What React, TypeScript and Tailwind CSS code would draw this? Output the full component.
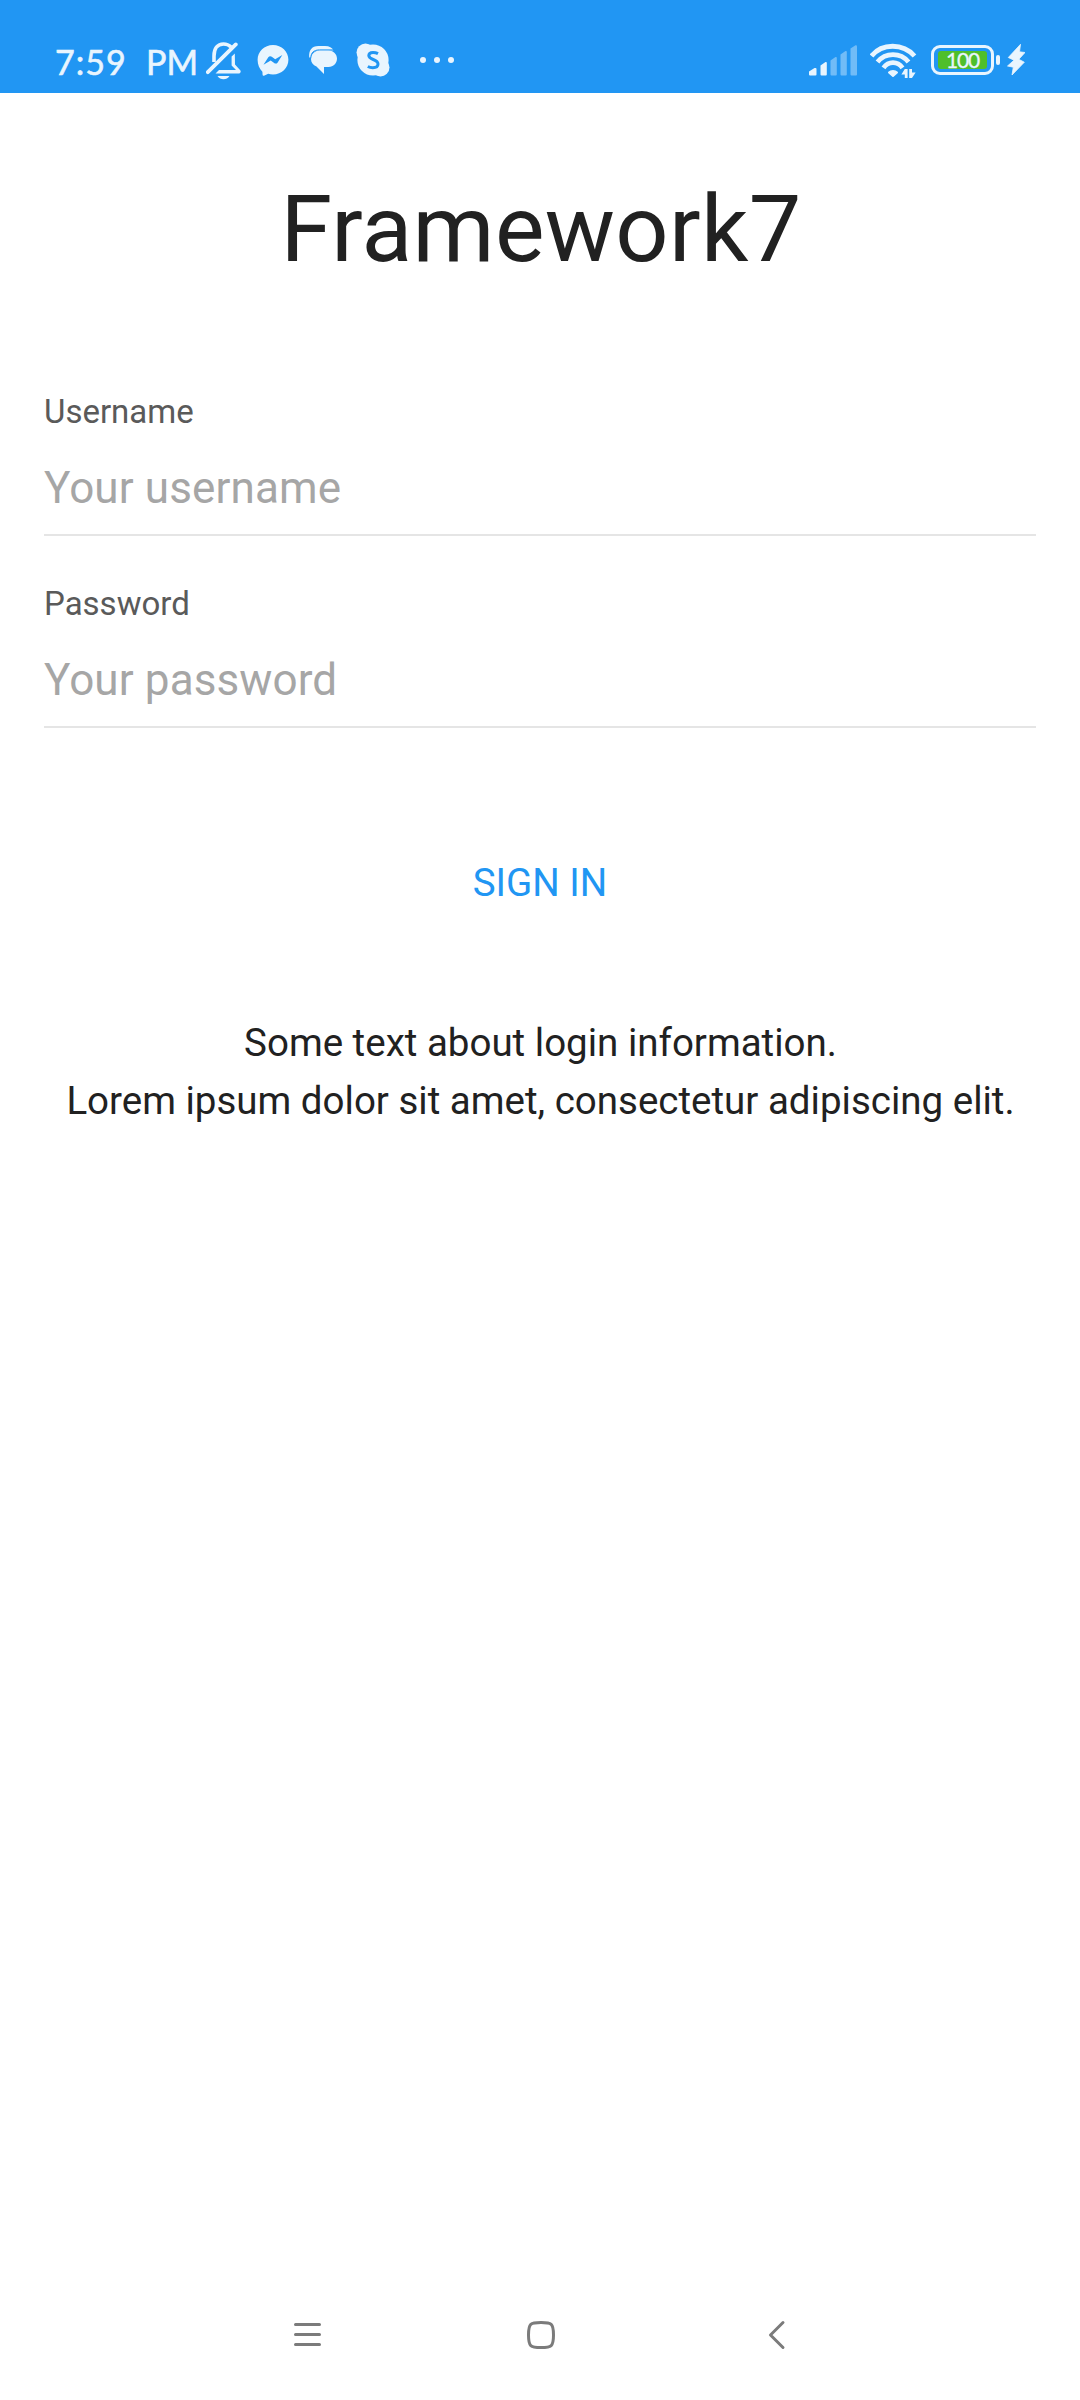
import React from "react";

const INK = "#e9f5fe";

function BellOff() {
  return (
    <svg width="36" height="40" viewBox="206 40 36 40" className="shrink-0" fill="none">
      <path d="M214 62V56C214 48.5 217.500 44 223.500 44C226.500 44 229 45 231 47" stroke={INK} strokeWidth="3.6" />
      <path d="M207.800 72.200L235.800 44.400" stroke={INK} strokeWidth="3.800" strokeLinecap="round" />
      <path d="M234.800 53.500L231.600 56.500V65.500L236 70H219L215.500 73.500H238.500C240.500 73.500 241.500 71.500 240 70L235 64.500Z" fill={INK} />
      <path d="M217.500 76H229.500C228 78.300 226 79.200 223.500 79.200C221 79.200 219 78.300 217.500 76Z" fill={INK} />
    </svg>
  );
}

function Messenger() {
  return (
    <svg width="32" height="32" viewBox="257 44 32 32" className="shrink-0">
      <path d="M273 45C281.600 45 288.400 51.400 288.400 59.800C288.400 68.200 281.600 74.500 273 74.500C271.200 74.500 269.600 74.200 268.200 73.800L264 75.700C263.200 76 262.600 75.600 262.600 74.800L262.400 71.700C259.400 69 257.600 64.800 257.600 59.800C257.600 51.400 264.400 45 273 45Z" fill={INK} />
      <path d="M263.500 64.800L268.300 57.300C269.100 56 270.700 55.800 271.800 56.700L275.200 59.300L282.300 55L277.700 62.400C276.900 63.700 275.300 64 274.200 63.100L270.700 60.500Z" fill="#2196f3" />
    </svg>
  );
}

function Chat() {
  return (
    <svg width="30" height="30" viewBox="308 46 30 30" className="shrink-0">
      <path d="M309.200 58.500C308.600 51.500 311.500 47 318.500 47H325C329.500 47 332 48.500 333.500 51.500H319C313.500 51.500 311 54 310.800 58.500Z" fill={INK} />
      <path d="M320.500 51.200H328C333 51.200 337 54.800 337 59.600C337 64.400 333.500 68 328.500 68H324V75L316.500 67.500C313 66 311 63.400 311 60C311 54.700 315 51.200 320.500 51.200Z" fill={INK} />
      <path d="M310.700 59.500C310.800 53.800 313.800 50.900 319.500 50.900H334" stroke="#2196f3" strokeWidth="1" fill="none" />
    </svg>
  );
}

function Skype() {
  return (
    <svg width="34" height="34" viewBox="356 43 34 34" className="shrink-0">
      <circle cx="373" cy="60" r="15.600" fill={INK} />
      <circle cx="365.500" cy="52.500" r="9" fill={INK} />
      <circle cx="380.500" cy="67.500" r="9" fill={INK} />
      <path d="M378 53.600C376.500 52.800 374.800 52.400 373 52.400C370.500 52.400 368.800 53.600 368.800 55.600C368.800 60.200 378 58.800 378 64C378 66.500 375.800 67.700 372.800 67.700C370.800 67.700 369.300 67.300 367.800 66.500" fill="none" stroke="#2196f3" strokeWidth="3" />
    </svg>
  );
}

function Signal() {
  return (
    <svg width="48" height="31" viewBox="809 45 48 31" className="shrink-0" fill={INK}>
      <path d="M809 71.500L814.500 68H815.500Q816.500 68 816.500 69V74.500Q816.500 75.500 815.500 75.500H810Q809 75.500 809 74.500Z" />
      <path d="M820.500 65.500L825.500 62Q826.800 61.500 826.800 63V74.500Q826.800 75.500 825.800 75.500H821.500Q820.500 75.500 820.500 74.500Z" />
      <g opacity=".4">
        <path d="M830.500 60.500L835.500 57Q836.800 56.500 836.800 58V74.500Q836.800 75.500 835.800 75.500H831.500Q830.500 75.500 830.500 74.500Z" />
        <path d="M840.500 54.500L845.500 51Q846.800 50.500 846.800 52V74.500Q846.800 75.500 845.800 75.500H841.500Q840.500 75.500 840.500 74.500Z" />
        <path d="M850.500 48.500L855.500 45.300Q857 45 857 46.500V74.500Q857 75.500 856 75.500H851.500Q850.500 75.500 850.500 74.500Z" />
      </g>
    </svg>
  );
}

function Wifi() {
  return (
    <svg width="47" height="37" viewBox="870 42 47 37" className="shrink-0">
      <g fill="none" stroke={INK} strokeWidth="4.800">
        <path d="M871.500 56C882 43 903 43 914.500 56" />
        <path d="M877.500 62C885.500 52.200 900.500 52.200 908.500 62" />
        <path d="M883.500 67.800C888.500 61 897.500 61 902.500 67.800" />
      </g>
      <path d="M889 72.500C891 70.500 895 70.500 897 72.500L893 76Z" fill={INK} stroke={INK} strokeWidth="2" strokeLinejoin="round" />
      <path d="M904.800 69H907.600V78H904.800V74.500H901.400ZM909.200 69H912V72.500H915.600L912 78H909.200Z" fill={INK} />
    </svg>
  );
}

function Battery() {
  return (
    <div className="flex shrink-0 items-center gap-[2px]">
      <div className="flex h-[30px] w-[63px] items-center justify-center rounded-[9px] border-3 border-[#e9f5fe]">
        <div className="flex h-[18px] w-[49px] items-center justify-center rounded-[3px] bg-[#4fbf2b]">
          <span className="font-['Lato'] text-[21px] leading-[18px] tracking-[-1.2px] text-[#e9f5fe] [-webkit-text-stroke:0.3px_#e9f5fe]">100</span>
        </div>
      </div>
      <div className="h-[10px] w-1 rounded-[2px] bg-[#e9f5fe]" />
    </div>
  );
}

function Bolt() {
  return (
    <svg width="18" height="32" viewBox="1007 45 18 32" className="shrink-0">
      <path d="M1020.500 45.300L1008.300 58.500L1014 61.200L1007.500 67L1013.300 68.200L1012 76L1024.300 63.200L1018.800 60.300L1025 53.500L1019.500 52.800Z" fill={INK} stroke={INK} strokeWidth=".8" strokeLinejoin="round" />
    </svg>
  );
}

function StatusBar() {
  return (
    <header className="flex h-[93px] items-center bg-[#2196f3] pt-[27px] pr-[55px] pl-[55px] text-[#e9f5fe]">
      <div className="flex w-[151px] pt-[3px] font-['Lato'] text-[34px] leading-[40px] [-webkit-text-stroke:0.6px_#e9f5fe]">
        <span className="w-[91px] tracking-[1px]">7:59</span>
        <span>PM</span>
      </div>
      <div className="flex items-center">
        <BellOff />
        <div className="ml-[15px] flex"><Messenger /></div>
        <div className="ml-[19px] flex"><Chat /></div>
        <div className="ml-[18px] flex"><Skype /></div>
        <div className="ml-[30px] flex gap-2">
          <i className="size-[6px] rounded-full bg-[#e9f5fe]" />
          <i className="size-[6px] rounded-full bg-[#e9f5fe]" />
          <i className="size-[6px] rounded-full bg-[#e9f5fe]" />
        </div>
      </div>
      <div className="ml-auto flex items-center">
        <Signal />
        <div className="ml-[13px] flex"><Wifi /></div>
        <div className="ml-[14px] flex"><Battery /></div>
        <div className="ml-[7px] flex"><Bolt /></div>
      </div>
    </header>
  );
}

function Field({ label, placeholder, type }: { label: string; placeholder: string; type: string }) {
  return (
    <label className="flex h-[192px] flex-col pt-[21px]">
      <span className="h-[41px] text-[33px] leading-[40px] text-[#5a5a5a]">{label}</span>
      <input
        type={type}
        placeholder={placeholder}
        className="h-[103px] w-full border-b-2 border-[#e5e5e5] bg-transparent pt-[8px] pb-0 text-[44px] tracking-[0.12px] text-[#212121] outline-none placeholder:text-[#a6a6a6]"
      />
    </label>
  );
}

export default function App() {
  return (
    <div className="flex h-[2400px] w-[1080px] flex-col overflow-hidden bg-white font-['Roboto',sans-serif] text-[#212121]">
      <StatusBar />
      <main className="flex flex-1 flex-col">
        <h1 className="mt-[81px] h-[110px] pl-[2px] text-center text-[93.5px] leading-[110px] tracking-[0.3px]">Framework7</h1>
        <form className="mt-[87px] flex flex-col px-11">
          <Field label="Username" placeholder="Your username" type="text" />
          <Field label="Password" placeholder="Your password" type="password" />
          <button type="button" className="mt-[78px] h-[100px] text-[38.5px] leading-[100px] text-[#2196f3] uppercase">
            Sign In
          </button>
        </form>
        <p className="mt-[81px] pl-px text-center text-[38.5px] leading-[57.5px]">
          Some text about login information.
          <br />
          Lorem ipsum dolor sit amet, consectetur adipiscing elit.
        </p>
      </main>
      <nav className="flex h-[130px] items-center pl-[292px]">
        <svg width="31" height="32" viewBox="292 2319 31 32" stroke="#7b7b7b" strokeWidth="3" strokeLinecap="round">
          <path d="M295.500 2324.500H319.500M295.500 2334.500H319.500M295.500 2344.500H319.500" />
        </svg>
        <svg className="ml-[202px]" width="32" height="32" viewBox="525 2319 32 32" fill="none" stroke="#7b7b7b" strokeWidth="3">
          <path d="M541 2322.500C551.500 2322.500 553.500 2323.500 553.500 2335C553.500 2346.500 551.500 2347.500 541 2347.500C530.500 2347.500 528.500 2346.500 528.500 2335C528.500 2323.500 530.500 2322.500 541 2322.500Z" />
        </svg>
        <svg className="ml-[210px]" width="20" height="32" viewBox="767 2319 20 32" fill="none" stroke="#7b7b7b" strokeWidth="3" strokeLinecap="round" strokeLinejoin="round">
          <path d="M783 2322.500L770.500 2335L783 2347.500" />
        </svg>
      </nav>
    </div>
  );
}
